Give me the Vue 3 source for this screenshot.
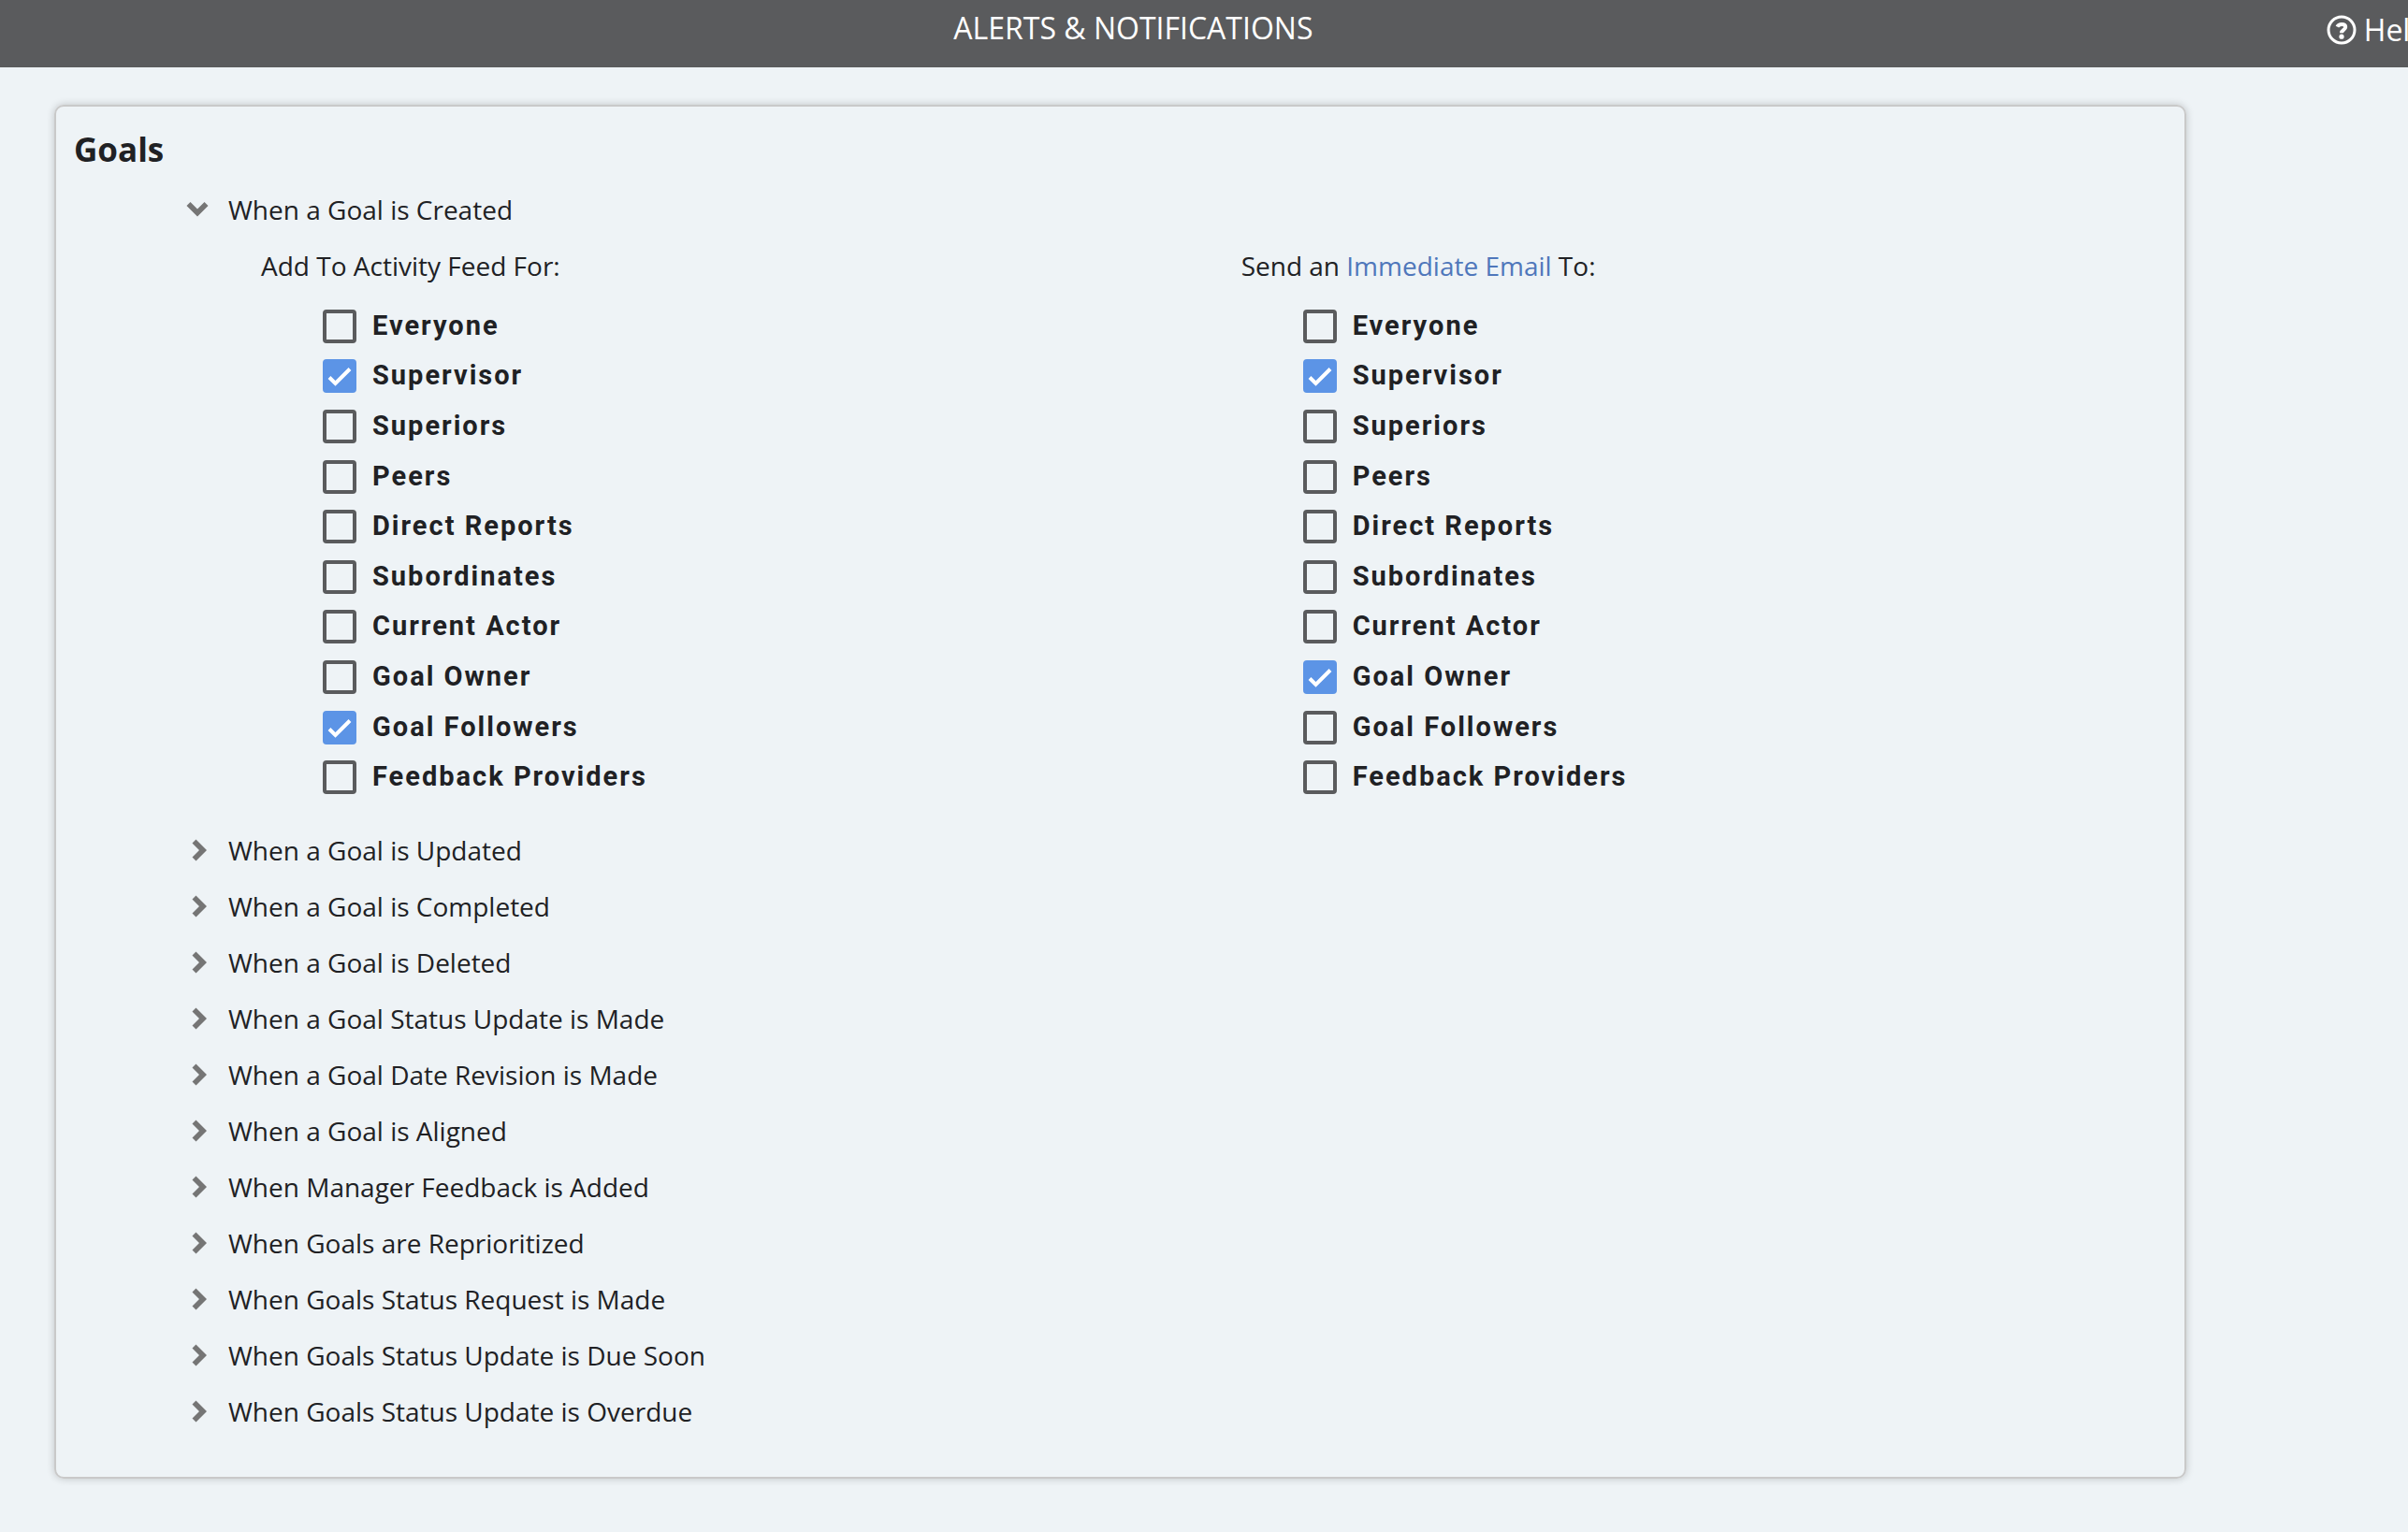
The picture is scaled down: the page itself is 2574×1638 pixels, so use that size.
<script setup>
import { reactive, ref } from 'vue'

const recipients = [
  'Everyone',
  'Supervisor',
  'Superiors',
  'Peers',
  'Direct Reports',
  'Subordinates',
  'Current Actor',
  'Goal Owner',
  'Goal Followers',
  'Feedback Providers',
]

const channels = reactive([
  { id: 'feed', selected: ['Supervisor', 'Goal Followers'] },
  { id: 'email', selected: ['Supervisor', 'Goal Owner'] },
])

const events = [
  'When a Goal is Created',
  'When a Goal is Updated',
  'When a Goal is Completed',
  'When a Goal is Deleted',
  'When a Goal Status Update is Made',
  'When a Goal Date Revision is Made',
  'When a Goal is Aligned',
  'When Manager Feedback is Added',
  'When Goals are Reprioritized',
  'When Goals Status Request is Made',
  'When Goals Status Update is Due Soon',
  'When Goals Status Update is Overdue',
]

const openEvent = ref(0)
</script>

<template>
  <div class="page">
    <header class="topbar">
      <h1>ALERTS &amp; NOTIFICATIONS</h1>
      <a class="help" href="#help">
        <svg viewBox="0 0 32 32" aria-hidden="true">
          <circle cx="16" cy="16" r="14" fill="none" stroke="currentColor" stroke-width="3" />
          <path d="M11.400 12.600C12.400 10.800 14 10 16.100 10C18.600 10 20.200 11.200 20.200 13C20.200 16 16 15.800 16 19.200" fill="none" stroke="currentColor" stroke-width="4" />
          <circle cx="16" cy="23.200" r="2.600" fill="currentColor" />
        </svg>
        <span>Help</span>
      </a>
    </header>

    <main>
      <section class="panel" aria-labelledby="goals-title">
        <h2 id="goals-title">Goals</h2>
        <ul class="events">
          <li v-for="(event, index) in events" :key="event">
            <button
              class="event"
              type="button"
              :aria-expanded="openEvent === index"
              @click="openEvent = openEvent === index ? -1 : index"
            >
              <svg v-if="openEvent === index" viewBox="0 0 24 24" aria-hidden="true">
                <path d="M3.500 4L11 11.500L18.500 4L22.500 8L11 19.500L-0.500 8Z" />
              </svg>
              <svg v-else viewBox="0 0 24 24" aria-hidden="true">
                <path d="M9.500 0.500L21 12L9.500 23.500L5.500 19.500L13 12L5.500 4.500Z" />
              </svg>
              <span>{{ event }}</span>
            </button>

            <div v-if="openEvent === index" class="channels">
              <fieldset v-for="channel in channels" :key="channel.id">
                <legend v-if="channel.id === 'feed'">Add To Activity Feed For:</legend>
                <legend v-else>Send an <a href="#immediate-email">Immediate Email</a> To:</legend>
                <div class="options">
                  <label v-for="name in recipients" :key="name">
                    <span class="box">
                      <input v-model="channel.selected" type="checkbox" :value="name" />
                      <svg viewBox="0 0 36 36" aria-hidden="true">
                        <path d="M7 19.500L13.500 26L29 10.500" />
                      </svg>
                    </span>
                    <span class="name">{{ name }}</span>
                  </label>
                </div>
              </fieldset>
            </div>
          </li>
        </ul>
      </section>
    </main>
  </div>
</template>

<style>
body {
  margin: 0;
  background: #eef3f6;
  overflow-x: hidden;
}
</style>

<style scoped>
.page {
  color: #202124;
  font: 28px/60px "Open Sans", sans-serif;
  overflow-x: hidden;
}

.topbar {
  display: grid;
  grid-template-columns: 1fr auto;
  align-items: start;
  height: 72px;
  background: #5a5b5d;
  color: #fff;
  font-size: 32px;
}

h1 {
  margin: 0;
  padding-right: 64px;
  font-size: 32px;
  font-weight: 400;
  text-align: center;
}

.help {
  display: flex;
  align-items: center;
  gap: 8px;
  margin-right: -22px;
  padding-top: 2px;
  color: inherit;
  text-decoration: none;
}

.help svg {
  width: 32px;
  height: 32px;
}

main {
  padding: 40px 237px 40px 58px;
}

.panel {
  padding: 16px 20px 40px 19px;
  border: 2px solid #c9c9c9;
  border-radius: 10px;
  box-shadow: 0 0 8px rgba(0, 0, 0, 0.2);
}

h2 {
  margin: 0;
  font-size: 35px;
  font-weight: 700;
}

.events {
  margin: 4px 0 0;
  padding: 0 0 0 121px;
  list-style: none;
}

.event {
  display: flex;
  align-items: center;
  gap: 20px;
  padding: 0;
  border: 0;
  background: none;
  color: inherit;
  font: inherit;
  cursor: pointer;
}

.event svg {
  width: 24px;
  height: 24px;
  fill: #757575;
  overflow: visible;
}

.channels {
  display: grid;
  grid-template-columns: 53fr 50fr;
  padding-left: 79px;
  padding-bottom: 21px;
}

fieldset {
  min-width: 0;
  margin: 0;
  padding: 0;
  border: 0;
}

legend {
  padding: 0;
}

legend a {
  color: #4f77bb;
  text-decoration: none;
}

.options {
  display: grid;
  grid-auto-rows: 1fr;
  min-height: 536px;
  padding: 8px 0 0 66px;
}

label {
  display: flex;
  align-items: center;
  justify-self: start;
  gap: 17px;
  font: 700 29px/50px Roboto, sans-serif;
  letter-spacing: 2px;
}

.box {
  display: grid;
}

.box > * {
  grid-area: 1 / 1;
}

.box input {
  width: 36px;
  height: 36px;
  margin: 0;
  appearance: none;
  border: 4px solid #5a5b5d;
  border-radius: 4px;
}

.box input:checked {
  border-color: #5c94e6;
  background: #5c94e6;
}

.box svg {
  width: 36px;
  height: 36px;
  fill: none;
  stroke: #fff;
  stroke-width: 4px;
  pointer-events: none;
  visibility: hidden;
}

.box input:checked + svg {
  visibility: visible;
}

.name {
  padding-bottom: 2px;
}
</style>
